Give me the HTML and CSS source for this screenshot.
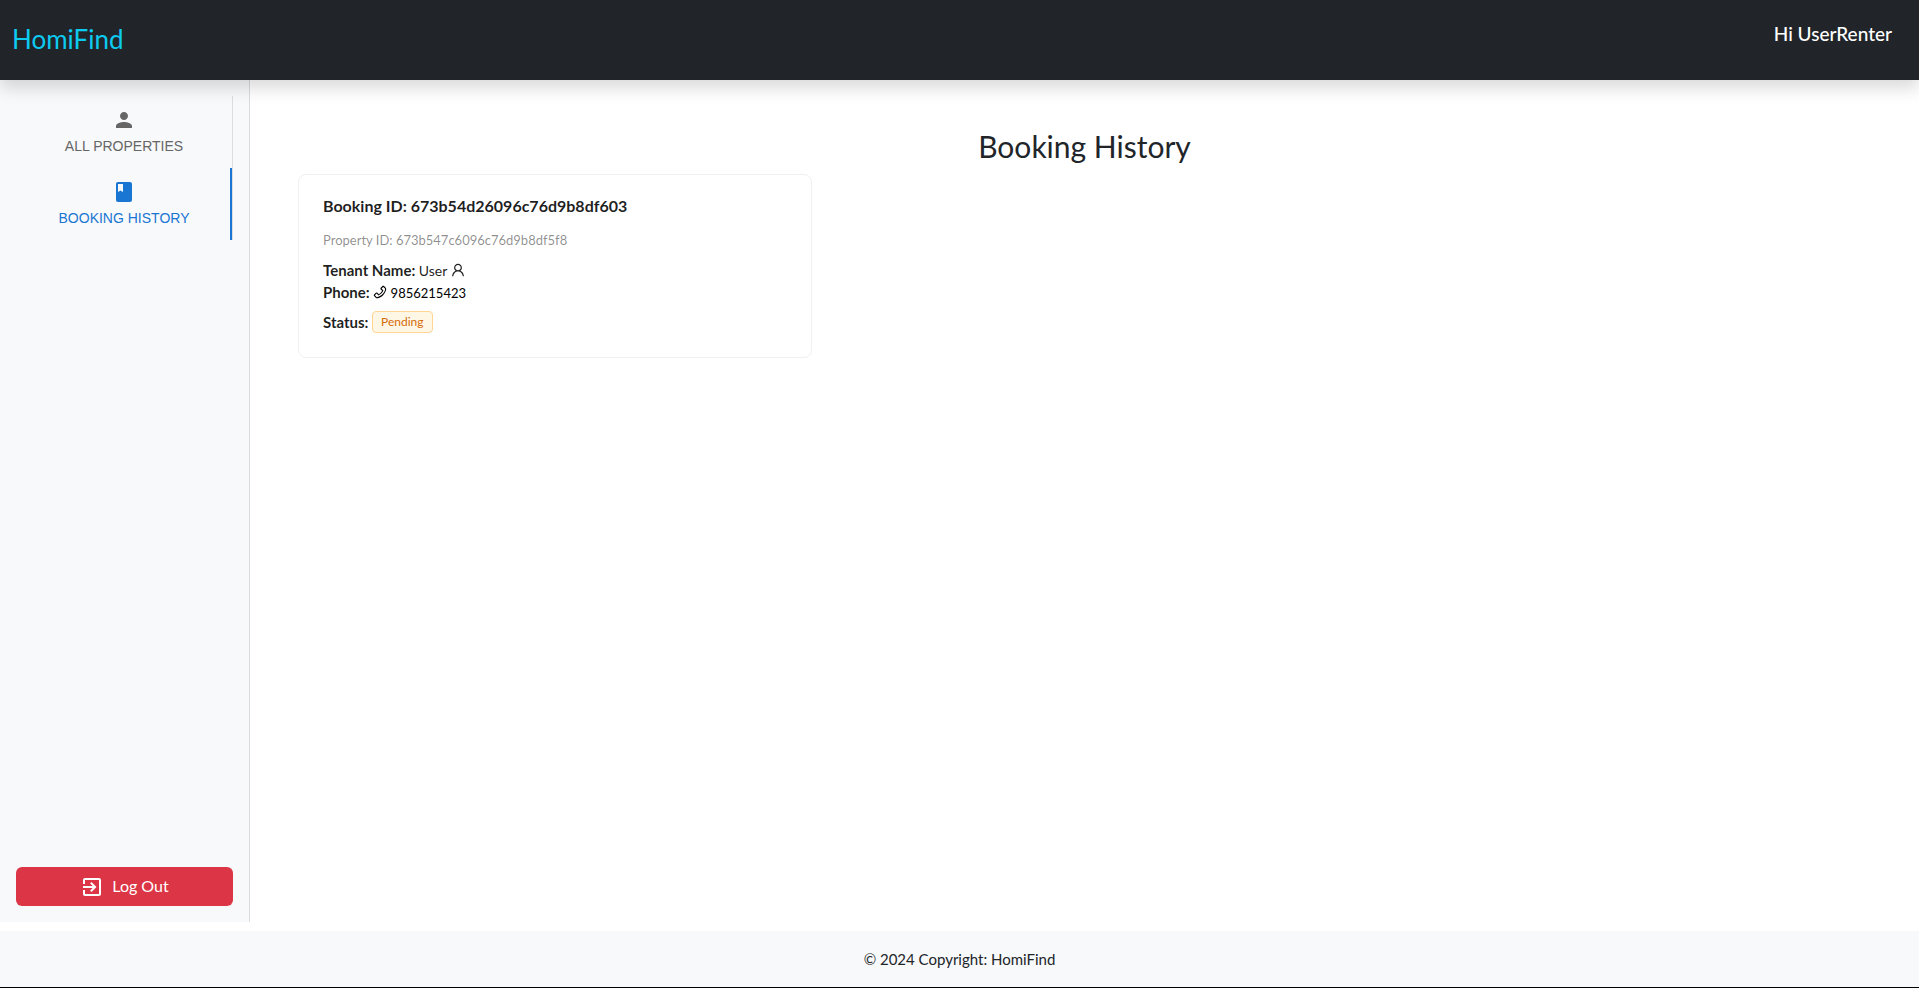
FILE: index.html
```html
<!DOCTYPE html>
<html lang="en">
<head>
<meta charset="utf-8">
<title>HomiFind - Booking History</title>
<link rel="stylesheet" href="styles.css">
</head>
<body>
<header class="navbar">
  <a class="brand" href="#">HomiFind</a>
  <p class="greeting">Hi UserRenter</p>
</header>
<div class="layout">
  <aside class="sidebar">
    <nav class="tabs">
      <button class="tab" type="button">
        <svg class="tab-icon" viewBox="0 0 24 24" aria-hidden="true"><path d="M12 12c2.21 0 4-1.79 4-4s-1.79-4-4-4-4 1.79-4 4 1.79 4 4 4m0 2c-2.67 0-8 1.34-8 4v2h16v-2c0-2.66-5.33-4-8-4"/></svg>
        ALL PROPERTIES
      </button>
      <button class="tab tab-active" type="button">
        <svg class="tab-icon" viewBox="0 0 24 24" aria-hidden="true"><path d="M18 2H6c-1.1 0-2 .9-2 2v16c0 1.1.9 2 2 2h12c1.100 0 2-.9 2-2V4c0-1.100-.9-2-2-2M6 4h5v8l-2.500-1.500L6 12z"/></svg>
        BOOKING HISTORY
      </button>
    </nav>
    <button class="logout" type="button">
      <svg class="logout-icon" viewBox="0 0 24 24" aria-hidden="true"><path d="M10.090 15.590 11.500 17l5-5-5-5-1.410 1.410L12.670 11H3v2h9.670zM19 3H5c-1.110 0-2 .9-2 2v4h2V5h14v14H5v-4H3v4c0 1.100.89 2 2 2h14c1.100 0 2-.9 2-2V5c0-1.100-.9-2-2-2"/></svg>
      <span class="logout-label">Log Out</span>
    </button>
  </aside>
  <main class="content">
    <h1 class="page-title">Booking History</h1>
    <div class="bookings">
      <article class="card">
        <h2 class="card-title">Booking ID: 673b54d26096c76d9b8df603</h2>
        <p class="property">Property ID: 673b547c6096c76d9b8df5f8</p>
        <div class="details">
          <p class="detail"><strong>Tenant Name:</strong> User
            <svg class="inline-icon" viewBox="64 64 896 896" aria-hidden="true"><path d="M858.500 763.600a374 374 0 0 0-80.600-119.500 375.630 375.630 0 0 0-119.500-80.600c-.4-.2-.8-.3-1.200-.5C719.500 518 760 444.700 760 362c0-137-111-248-248-248S264 225 264 362c0 82.700 40.500 156 102.800 201.100-.4.2-.8.3-1.200.5-44.800 18.900-85 46-119.500 80.600a375.630 375.630 0 0 0-80.600 119.500A371.700 371.700 0 0 0 136 901.800a8 8 0 0 0 8 8.200h60c4.400 0 7.900-3.500 8-7.800 2-77.200 33-149.500 87.800-204.300 56.700-56.700 132-87.900 212.200-87.900s155.500 31.200 212.200 87.900C779 752.700 810 825 812 902.200c.1 4.400 3.600 7.800 8 7.800h60a8 8 0 0 0 8-8.200c-1-47.800-10.900-94.300-29.500-138.200zM512 534c-45.900 0-89.100-17.900-121.600-50.400S340 407.900 340 362c0-45.900 17.900-89.100 50.400-121.600S466.100 190 512 190s89.100 17.900 121.600 50.400S684 316.100 684 362c0 45.900-17.900 89.100-50.400 121.600S557.900 534 512 534z"/></svg>
          </p>
          <p class="detail"><strong>Phone:</strong>
            <a class="phone" href="tel:9856215423"><svg class="inline-icon" viewBox="64 64 896 896" aria-hidden="true"><path d="M877.100 238.700L770.600 132.300c-13-13-30.400-20.300-48.800-20.300s-35.800 7.200-48.800 20.300L558.300 246.800c-13 13-20.300 30.500-20.300 48.900 0 18.500 7.200 35.800 20.300 48.900l89.600 89.700a405.460 405.460 0 0 1-86.400 127.300c-36.700 36.900-79.600 66-127.200 86.600l-89.600-89.700c-13-13-30.400-20.300-48.800-20.300a68.200 68.200 0 0 0-48.800 20.300L132.300 673c-13 13-20.300 30.500-20.300 48.900 0 18.500 7.200 35.800 20.300 48.900l106.400 106.400c22.200 22.200 52.800 34.900 84.200 34.900 6.500 0 12.800-.5 19.200-1.600 132.400-21.800 263.800-92.300 369.900-198.300C818 606 888.400 474.600 910.400 342.100c6.300-37.600-6.300-76.300-33.300-103.400zm-37.600 91.500c-19.500 117.900-82.900 235.500-178.400 331s-213 158.900-330.900 178.400c-14.800 2.500-30-2.500-40.800-13.200L184.900 721.900 295.700 611l119.800 120 .9.900 21.600-8a481.290 481.290 0 0 0 285.700-285.800l8-21.600-120.800-120.700 110.800-110.900 104.500 104.500c10.800 10.800 15.800 26 13.300 40.800z"/></svg>
            9856215423</a>
          </p>
        </div>
        <p class="detail"><strong>Status:</strong> <span class="tag">Pending</span></p>
      </article>
    </div>
  </main>
</div>
<footer class="footer">© 2024 Copyright: HomiFind</footer>
</body>
</html>
```
FILE: styles.css
```css
* { box-sizing: border-box; }

body {
  display: flex;
  flex-direction: column;
  min-height: 100vh;
  margin: 0;
  font: 16px/24px "Gill Sans MT", "Gill Sans", Lato, sans-serif;
  color: #212529;
  background: #fff;
}

h1, h2, p { margin: 0; }
button { font: inherit; border: 0; cursor: pointer; }
svg { fill: currentColor; }

.navbar {
  position: relative;
  display: flex;
  justify-content: space-between;
  align-items: center;
  height: 80px;
  padding: 0 27px 0 12px;
  background: #212529;
  box-shadow: 0 8px 16px rgba(0, 0, 0, .15);
}
.brand {
  padding-bottom: 2px;
  font-size: 26px;
  line-height: 40px;
  color: #0dcaf0;
  text-decoration: none;
}
.greeting {
  padding-bottom: 12px;
  font-size: 19px;
  font-weight: 500;
  color: #fff;
}

.layout { display: flex; flex: 1; margin-bottom: 9px; }

.sidebar {
  display: flex;
  flex-direction: column;
  justify-content: space-between;
  flex: 0 0 250px;
  padding: 16px;
  background: #f8f9fb;
  border-right: 1px solid #d8dadd;
}
.tabs {
  display: flex;
  flex-direction: column;
  border-right: 1px solid #dcddde;
}
.tab {
  display: flex;
  flex-direction: column;
  align-items: center;
  justify-content: flex-start;
  gap: 5px;
  height: 72px;
  padding: 12px 0 0;
  font: 14px/18px "Liberation Sans", Arial, sans-serif;
  color: #666;
  background: none;
}
.tab-active {
  color: #1976d2;
  box-shadow: inset -2px 0 #1976d2;
}
.tab-icon { width: 24px; height: 24px; }
.logout {
  display: flex;
  align-items: center;
  justify-content: center;
  gap: 8px;
  height: 39px;
  padding: 0 12px;
  color: #fff;
  background: #dc3545;
  border-radius: 6px;
}
.logout-icon { width: 24px; height: 24px; }
.logout-label { padding-bottom: 2px; }

.content { flex: 1; padding: 48px; }
.page-title {
  padding-bottom: 2px;
  margin-bottom: 8px;
  font-size: 30px;
  line-height: 36px;
  font-weight: 400;
  text-align: center;
}
.bookings {
  display: grid;
  grid-template-columns: repeat(3, 1fr);
  gap: 16px;
}

.card {
  padding: 20px 24px 24px;
  font-size: 14px;
  line-height: 22px;
  color: rgba(0, 0, 0, .88);
  border: 1px solid #f0f0f0;
  border-radius: 8px;
}
.card-title {
  margin-bottom: 12px;
  font-size: 16px;
  line-height: 22px;
  font-weight: 700;
}
.property {
  margin-bottom: 8px;
  font-size: 13px;
  color: rgba(0, 0, 0, .45);
}
.details { margin-bottom: 8px; }
.detail { height: 22px; }
.detail strong { font-size: 15px; }
.inline-icon { width: 14px; height: 14px; vertical-align: -1px; }
.phone { font-size: 13px; color: #000; text-decoration: none; }
.tag {
  display: inline-block;
  padding: 0 8px;
  font-size: 12px;
  line-height: 20px;
  color: #d46b08;
  background: #fff7e6;
  border: 1px solid #ffd591;
  border-radius: 4px;
  vertical-align: top;
}

.footer {
  padding: 16px;
  font-size: 15px;
  text-align: center;
  background: #f8f9fb;
  border-bottom: 1px solid #000;
}
```
